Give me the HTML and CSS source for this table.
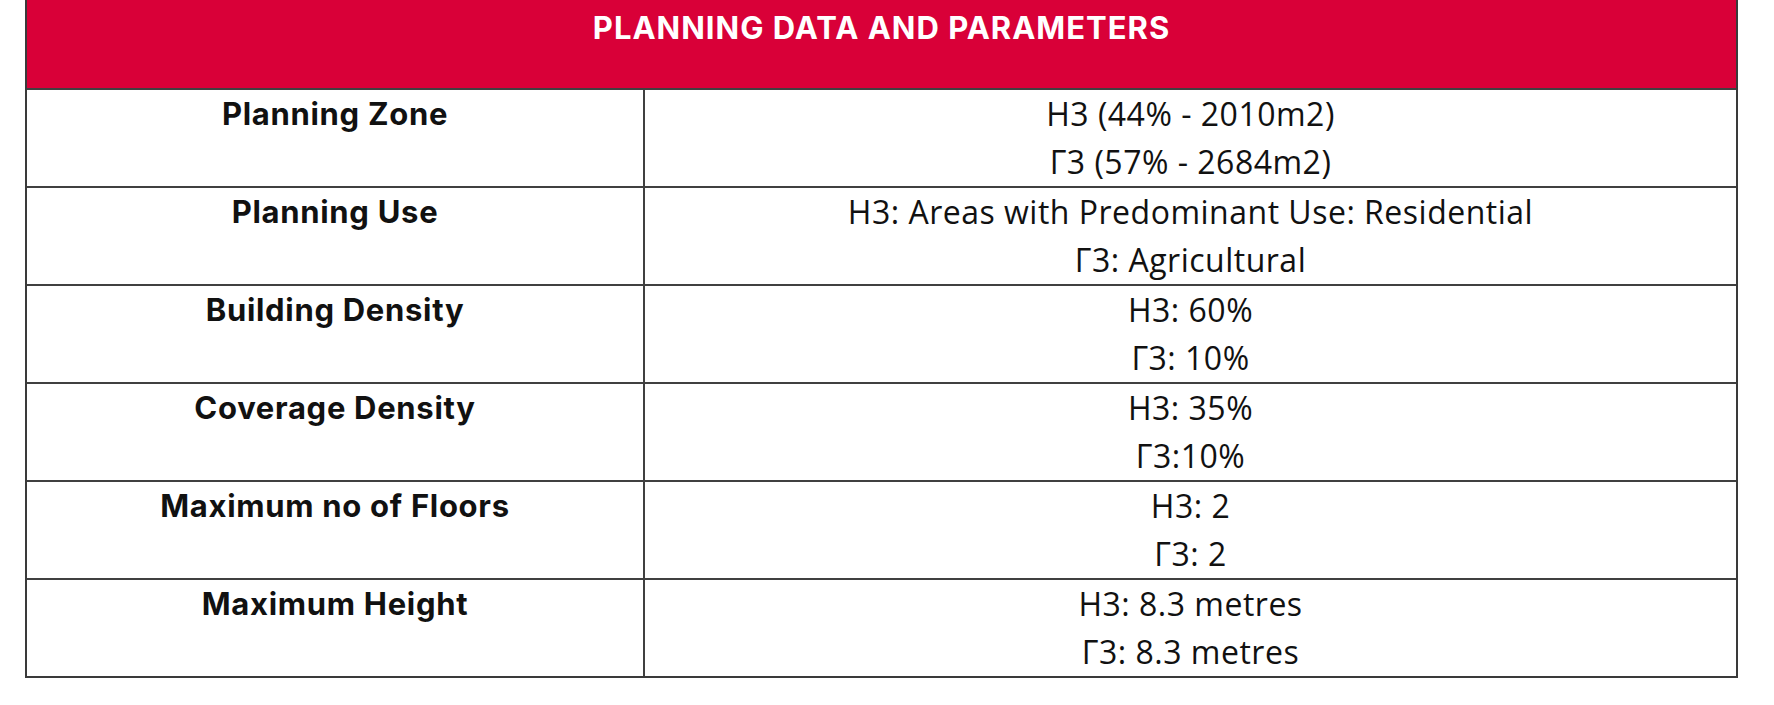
FILE: index.html
```html
<!DOCTYPE html>
<html lang="en">
<head>
<meta charset="utf-8">
<title>Planning Data and Parameters</title>
<link rel="stylesheet" href="styles.css">
</head>
<body>
<div class="sheet">
  <div class="head">PLANNING DATA AND PARAMETERS</div>
  <div class="row">
    <div class="label">Planning Zone</div>
    <div class="value"><div>H3 (44% - 2010m2)</div><div>Γ3 (57% - 2684m2)</div></div>
  </div>
  <div class="row">
    <div class="label">Planning Use</div>
    <div class="value"><div>H3: Areas with Predominant Use: Residential</div><div>Γ3: Agricultural</div></div>
  </div>
  <div class="row">
    <div class="label">Building Density</div>
    <div class="value"><div>H3: 60%</div><div>Γ3: 10%</div></div>
  </div>
  <div class="row">
    <div class="label">Coverage Density</div>
    <div class="value"><div>H3: 35%</div><div>Γ3:10%</div></div>
  </div>
  <div class="row">
    <div class="label">Maximum no of Floors</div>
    <div class="value"><div>H3: 2</div><div>Γ3: 2</div></div>
  </div>
  <div class="row">
    <div class="label">Maximum Height</div>
    <div class="value"><div>H3: 8.3 metres</div><div>Γ3: 8.3 metres</div></div>
  </div>
</div>
</body>
</html>
```

FILE: styles.css
```css
html, body {
  margin: 0;
  padding: 0;
  background: #ffffff;
}

.sheet {
  margin-left: 25px;
  width: 1713px;
  box-sizing: border-box;
  border-left: 2px solid #3a3a3a;
  border-right: 2px solid #3a3a3a;
  border-bottom: 2px solid #3a3a3a;
  color: #111111;
}

.head {
  height: 88px;
  box-sizing: border-box;
  padding-top: 11px;
  background: #d90038;
  color: #ffffff;
  font-family: Inter, Roboto, sans-serif;
  font-weight: 700;
  font-size: 31px;
  line-height: 34px;
  letter-spacing: 1px;
  text-align: center;
}

.row {
  display: grid;
  grid-template-columns: 618px 1fr;
  border-top: 2px solid #404040;
  line-height: 48px;
}

.label {
  border-right: 2px solid #404040;
  text-align: center;
  font-family: Inter, "Open Sans", sans-serif;
  font-weight: 700;
  font-size: 31px;
  letter-spacing: 0.7px;
}

.value {
  text-align: center;
  font-family: "Open Sans", Roboto, sans-serif;
  font-size: 32px;
  letter-spacing: 0.5px;
}
```
